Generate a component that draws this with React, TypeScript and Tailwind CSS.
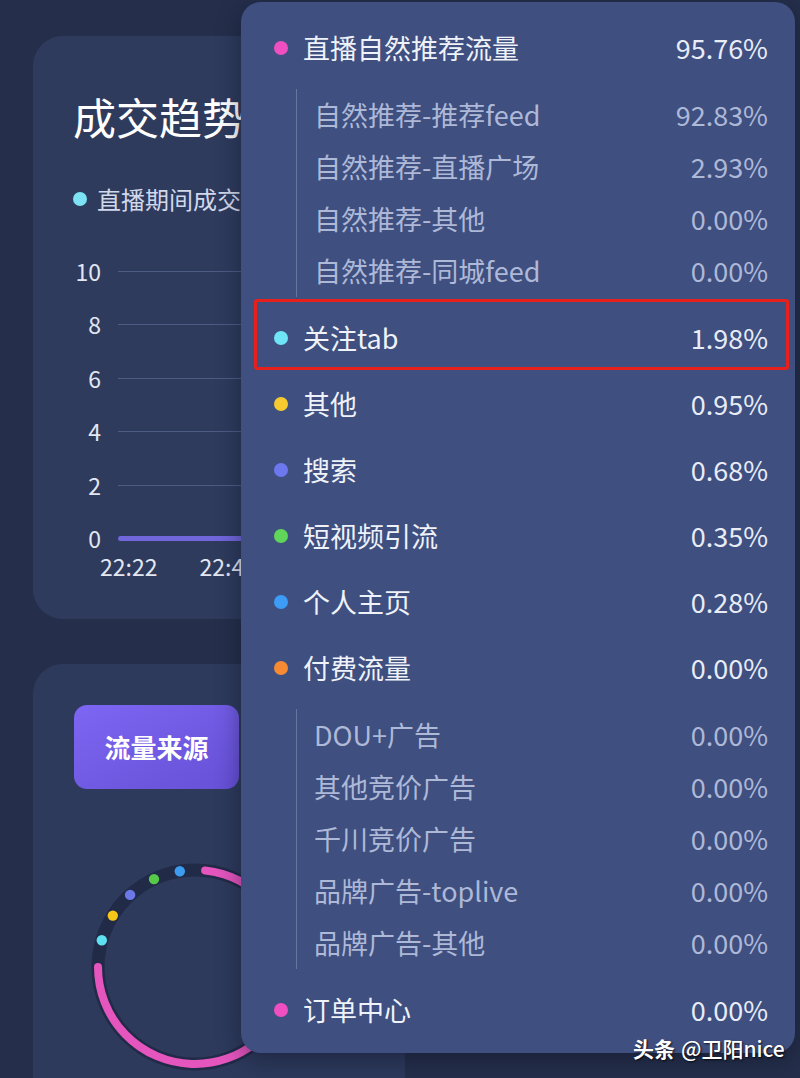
// 直播数据大屏 — 成交趋势 / 流量来源 + 流量明细浮层

const FONT = { fontFamily: '"Noto Sans CJK SC", "Noto Sans", sans-serif' };

interface SubItem {
  label: string;
  value: string;
}

interface SourceItem {
  label: string;
  value: string;
  dot: string;
  highlight?: boolean;
  children?: SubItem[];
}

const sources: SourceItem[] = [
  {
    label: "直播自然推荐流量",
    value: "95.76%",
    dot: "bg-[#f04fc2]",
    children: [
      { label: "自然推荐-推荐feed", value: "92.83%" },
      { label: "自然推荐-直播广场", value: "2.93%" },
      { label: "自然推荐-其他", value: "0.00%" },
      { label: "自然推荐-同城feed", value: "0.00%" },
    ],
  },
  { label: "关注tab", value: "1.98%", dot: "bg-[#6fe4f6]", highlight: true },
  { label: "其他", value: "0.95%", dot: "bg-[#f7cb30]" },
  { label: "搜索", value: "0.68%", dot: "bg-[#6e78ee]" },
  { label: "短视频引流", value: "0.35%", dot: "bg-[#5fd65a]" },
  { label: "个人主页", value: "0.28%", dot: "bg-[#3d9cf6]" },
  {
    label: "付费流量",
    value: "0.00%",
    dot: "bg-[#f78a33]",
    children: [
      { label: "DOU+广告", value: "0.00%" },
      { label: "其他竞价广告", value: "0.00%" },
      { label: "千川竞价广告", value: "0.00%" },
      { label: "品牌广告-toplive", value: "0.00%" },
      { label: "品牌广告-其他", value: "0.00%" },
    ],
  },
  { label: "订单中心", value: "0.00%", dot: "bg-[#f04fc2]" },
];

const yTicks = ["10", "8", "6", "4", "2", "0"];

// ── 浮层行 ──────────────────────────────────────────────

function MainRow({ item }: { item: SourceItem }) {
  return (
    <div className="relative flex h-[66px] items-center">
      <span className={`h-[14px] w-[14px] shrink-0 rounded-full ${item.dot}`} />
      <span className="ml-[15px] flex-1 text-[27px] text-[#eff2f9]">{item.label}</span>
      <span className="text-[27px] text-[#e8ecf6]">{item.value}</span>
      {item.highlight && (
        <div className="absolute -left-[20px] -right-[21px] -top-[6px] bottom-[1px] rounded-[3px] border-[3px] border-[#e8201c]" />
      )}
    </div>
  );
}

function SubGroup({ items }: { items: SubItem[] }) {
  return (
    <div className="my-[8px] ml-[22px] border-l border-[#66759f] pl-[17px]">
      {items.map((s) => (
        <div key={s.label} className="flex h-[52px] items-center text-[27px] text-[#aeb8d7]">
          <span className="flex-1">{s.label}</span>
          <span>{s.value}</span>
        </div>
      ))}
    </div>
  );
}

// ── 环形图 ──────────────────────────────────────────────

function Donut() {
  const dots = [
    { cx: 16.8, cy: 83.3, fill: "#5fe0f0" },
    { cx: 27.8, cy: 58.6, fill: "#f5c518" },
    { cx: 45.1, cy: 37.9, fill: "#6c78e8" },
    { cx: 69.0, cy: 22.1, fill: "#57c94a" },
    { cx: 94.8, cy: 14.2, fill: "#3b9cf0" },
  ];
  return (
    <svg width="220" height="220" viewBox="0 0 220 220">
      <circle cx="110" cy="110" r="97" fill="none" stroke="#212a46" strokeWidth="13" />
      <path
        d="M120.1 13.5 A97 97 0 1 1 13 110"
        fill="none"
        stroke="#e455bd"
        strokeWidth="8"
        strokeLinecap="round"
      />
      {dots.map((d) => (
        <circle key={d.fill} cx={d.cx} cy={d.cy} r="5.2" fill={d.fill} />
      ))}
    </svg>
  );
}

// ═══════════════════════════════════════════════════════

export default function App() {
  return (
    <div
      className="relative h-[1078px] w-[800px] overflow-hidden bg-[#252f4b] pt-[36px]"
      style={FONT}
    >
      {/* 成交趋势 */}
      <div className="ml-[33px] w-[734px] rounded-[30px] bg-[#2e3b5d] pb-[40px] pl-[40px] pt-[55px]">
        <div className="text-[43px] leading-[50px] text-white">成交趋势</div>
        <div className="mt-[43px] flex h-[30px] items-center">
          <span className="h-[14px] w-[14px] rounded-full bg-[#7de3f4]" />
          <span className="ml-[10px] text-[24px] text-[#d2d8eb]">直播期间成交</span>
        </div>

        <div className="mt-[43px] flex flex-col gap-[25.5px]">
          {yTicks.map((t) => (
            <div key={t} className="flex h-[28px] items-center">
              <span className="w-[28px] text-right text-[23px] text-[#e3e7f2]">{t}</span>
              {t === "0" ? (
                <span className="ml-[17px] h-[5px] flex-1 rounded-l-full bg-[#7166dc]" />
              ) : (
                <span className="ml-[17px] h-px flex-1 bg-[#4d5c85]" />
              )}
            </div>
          ))}
        </div>

        <div className="ml-[27px] flex gap-[42px] text-[23px] leading-[26px] text-[#e3e7f2]">
          <span>22:22</span>
          <span>22:42</span>
        </div>
      </div>

      {/* 流量来源 */}
      <div className="ml-[33px] mt-[45px] h-[500px] w-[372px] rounded-[30px] bg-[#2d3a5c] pl-[41px] pt-[41px]">
        <div className="flex h-[84px] w-[165px] items-center justify-center rounded-[13px] bg-gradient-to-br from-[#7d66f2] to-[#6650d6] text-[26px] font-bold text-white">
          流量来源
        </div>
        <div className="ml-[11px] mt-[68px]">
          <Donut />
        </div>
      </div>

      {/* 流量明细浮层 */}
      <div className="absolute left-[241px] top-[2px] w-[554px] rounded-[20px] bg-[#3e4f80] pb-[10px] pl-[33px] pr-[27px] pt-[13px] shadow-[0_6px_24px_rgba(10,14,30,0.45)]">
        {sources.map((item) => (
          <div key={item.label}>
            <MainRow item={item} />
            {item.children && <SubGroup items={item.children} />}
          </div>
        ))}
      </div>

      {/* 水印 */}
      <div className="absolute left-[633px] top-[1034px] flex items-center gap-[6px] text-[21px] font-medium leading-[28px] text-white [text-shadow:1px_1px_2px_rgba(0,0,0,0.8)]">
        <span className="font-bold">头条</span>
        <span>@卫阳nice</span>
      </div>
    </div>
  );
}
